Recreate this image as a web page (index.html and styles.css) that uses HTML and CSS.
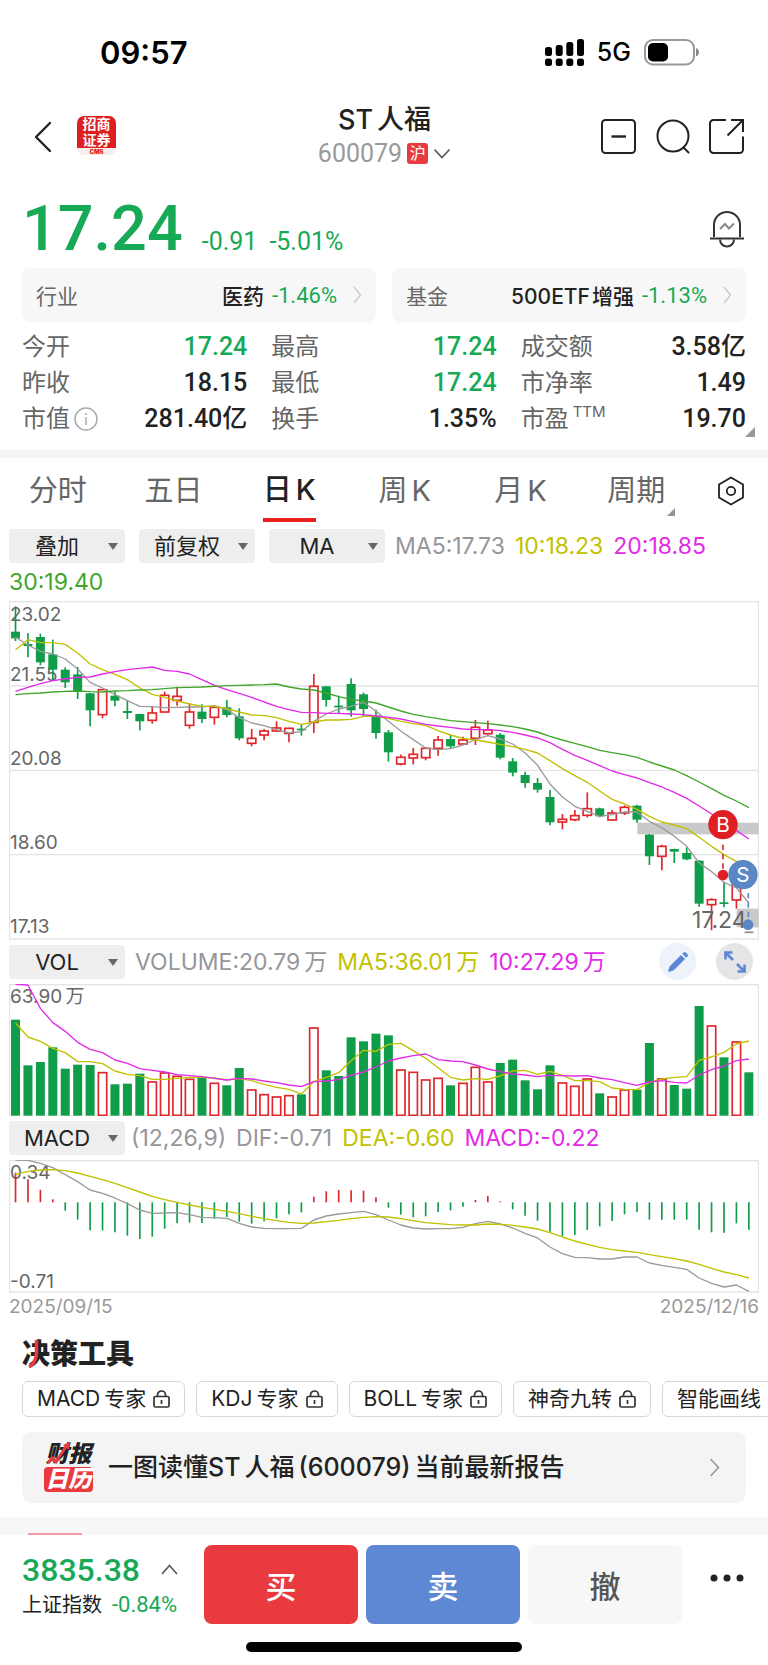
FILE: index.html
```html
<!DOCTYPE html>
<html lang="zh-CN">
<head>
<meta charset="utf-8">
<meta name="viewport" content="width=device-width, initial-scale=1">
<title>ST人福 600079</title>
<link rel="stylesheet" href="styles.css">
</head>
<body>
<div class="status">
  <span class="clock">09:57</span>
  <span class="status-right">
    <svg width="39" height="27" viewBox="0 0 39 27"><g><rect x="0" y="8" width="7" height="9" rx="2.5"/><rect x="10.700" y="6" width="7" height="11" rx="2.5"/><rect x="21.300" y="3" width="7" height="14" rx="2.500"/><rect x="32" y="0" width="7" height="17" rx="2.500"/><rect x="0" y="19.500" width="7" height="7.500" rx="2.500"/><rect x="10.700" y="19.500" width="7" height="7.500" rx="2.500"/><rect x="21.300" y="19.500" width="7" height="7.500" rx="2.500"/><rect x="32" y="19.500" width="7" height="7.500" rx="2.500"/></g></svg>
    <span class="net">5G</span>
    <svg width="56" height="27" viewBox="0 0 56 27"><rect x="1" y="1" width="49" height="24.500" rx="8" fill="none" stroke="#999" stroke-width="2"/><rect x="4" y="4" width="20" height="18.500" rx="5"/><path d="M52 9c4 1.500 4 7 0 8.500z" fill="#888"/></svg>
  </span>
</div>

<header class="head">
  <div class="head-left">
    <button class="icon-btn" aria-label="返回"><svg width="18" height="32" viewBox="0 0 18 32"><path d="M16 2 2 16l14 14" fill="none" stroke="#222" stroke-width="2.400" stroke-linecap="round" stroke-linejoin="round"/></svg></button>
    <div class="broker"><span>招商</span><span>证券</span><b>CMS</b></div>
  </div>
  <div class="head-mid">
    <h1>ST<span class="cjk-gap">人福</span></h1>
    <div class="code"><span class="num">600079</span><span class="badge">沪</span><svg width="18" height="11" viewBox="0 0 18 11"><path d="m1.500 1.500 7.500 8 7.500-8" fill="none" stroke="#555" stroke-width="1.600"/></svg></div>
  </div>
  <div class="head-right">
    <button class="icon-btn" aria-label="移除自选"><svg width="36" height="36" viewBox="0 0 36 36"><g fill="none" stroke="#222" stroke-width="2"><rect x="1" y="1" width="33" height="33" rx="3.500"/><path d="M10.500 17.500h14.500" stroke-width="2.400"/></g></svg></button>
    <button class="icon-btn" aria-label="搜索"><svg width="36" height="36" viewBox="0 0 36 36"><g fill="none" stroke="#222" stroke-width="2" stroke-linecap="round"><circle cx="18" cy="17" r="15.500"/><path d="m28.500 28.500 5 5"/></g></svg></button>
    <button class="icon-btn" aria-label="分享"><svg width="36" height="36" viewBox="0 0 36 36"><g fill="none" stroke="#222" stroke-width="2"><path d="M17 1H4.500A3.500 3.500 0 0 0 1 4.500v26A3.500 3.500 0 0 0 4.500 34h26a3.500 3.500 0 0 0 3.500-3.500V17.500M22 1h12v12M34 1 18.500 16.500"/></g></svg></button>
  </div>
</header>

<section class="price-row">
  <strong class="price num">17.24</strong><span class="delta num">-0.91</span><span class="delta num">-5.01%</span>
  <button class="icon-btn bell" aria-label="预警"><svg width="36" height="38" viewBox="0 0 36 38"><g fill="none" stroke="#333" stroke-width="2"><path d="M5 27V15a13 13 0 0 1 26 0v12M1 28.500h34"/><path d="M11 29.500a7 7 0 0 0 14 0"/><path d="m11 19 5-5 4 4.500 5-5" stroke="#888"/></g></svg></button>
</section>

<section class="cards">
  <a class="tag-card" href="#"><span class="lab">行业</span><span class="name">医药</span><span class="num g">-1.46%</span><svg width="9" height="18" viewBox="0 0 9 18"><path d="m1 1 6.500 8L1 17" fill="none" stroke="#ccc" stroke-width="1.500"/></svg></a>
  <a class="tag-card" href="#"><span class="lab">基金</span><span class="name">500ETF<span class="thin-gap">增强</span></span><span class="num g">-1.13%</span><svg width="9" height="18" viewBox="0 0 9 18"><path d="m1 1 6.500 8L1 17" fill="none" stroke="#ccc" stroke-width="1.500"/></svg></a>
</section>

<dl class="stats">
  <div><dt>今开</dt><dd class="g">17.24</dd></div>
  <div><dt>最高</dt><dd class="g">17.24</dd></div>
  <div><dt>成交额</dt><dd>3.58亿</dd></div>
  <div><dt>昨收</dt><dd>18.15</dd></div>
  <div><dt>最低</dt><dd class="g">17.24</dd></div>
  <div><dt>市净率</dt><dd>1.49</dd></div>
  <div><dt class="with-info">市值<svg width="24" height="24" viewBox="0 0 24 24"><g fill="none" stroke="#aaa" stroke-width="1.500"><circle cx="12" cy="12" r="11"/><path d="M12 10v8M12 6v2"/></g></svg></dt><dd>281.40亿</dd></div>
  <div><dt>换手</dt><dd>1.35%</dd></div>
  <div><dt>市盈<sup>TTM</sup></dt><dd>19.70</dd></div>
  <i class="corner"></i>
</dl>
<div class="band"></div>

<nav class="tabs">
  <button>分时</button><button>五日</button><button class="on">日<span class="cjk-gap">K</span></button><button>周<span class="cjk-gap">K</span></button><button>月<span class="cjk-gap">K</span></button><button class="more">周期</button>
  <button class="icon-btn" aria-label="设置"><svg width="28" height="30" viewBox="0 0 28 30"><g fill="none" stroke="#222" stroke-width="1.800" stroke-linejoin="round"><path d="M14 1.500 26 8.500v13l-12 7-12-7v-13z"/><circle cx="14" cy="15" r="4.200"/></g></svg></button>
</nav>

<main class="charts">
  <div class="bar wrap">
    <label class="pick"><select aria-label="叠加"><option>叠加</option></select></label>
    <label class="pick"><select aria-label="复权"><option>前复权</option></select></label>
    <label class="pick last"><select aria-label="均线"><option>MA</option></select></label>
    <span class="gray">MA5:17.73</span><span class="yellow">10:18.23</span><span class="pink">20:18.85</span><span class="green">30:19.40</span>
  </div>
  <svg id="kline" class="chart" viewBox="27 34 2250 1016"></svg>
  <div class="bar">
    <label class="pick last"><select aria-label="成交量指标"><option>VOL</option></select></label>
    <span class="gray">VOLUME:20.79<span class="cjk-gap">万</span></span><span class="yellow">MA5:36.01<span class="cjk-gap">万</span></span><span class="pink">10:27.29<span class="cjk-gap">万</span></span>
    <span class="tools">
      <button class="round blue" aria-label="画线"><svg width="22" height="22" viewBox="0 0 22 22"><path d="M1 21 2.500 15.500 14 4l4 4L6.500 19.500zM15.200 2.800l1.300-1.300a1.600 1.600 0 0 1 2.300 0l1.700 1.700a1.600 1.600 0 0 1 0 2.300l-1.300 1.300z" fill="#5b87d6"/></svg></button>
      <button class="round" aria-label="全屏"><svg width="22" height="22" viewBox="0 0 22 22"><path d="M1.500 8.500v-7h7M2 2l7 7M20.500 13.500v7h-7M20 20l-7-7" fill="none" stroke="#5b87d6" stroke-width="2.600"/></svg></button>
    </span>
  </div>
  <svg id="vol" class="chart" viewBox="27 147 2250 398"></svg>
  <div class="bar tight">
    <label class="pick"><select aria-label="指标"><option>MACD</option></select></label>
    <span class="gray">(12,26,9)</span><span class="gray">DIF:-0.71</span><span class="yellow">DEA:-0.60</span><span class="pink">MACD:-0.22</span>
  </div>
  <svg id="macd" class="chart" viewBox="27 677 2250 398"></svg>
  <div class="dates"><span>2025/09/15</span><span>2025/12/16</span></div>
</main>

<section class="decide">
  <h2>决策工具<svg class="slash" width="12" height="28" viewBox="0 0 12 28"><path d="M8.500 0v11C8.500 20 6 24.500 1 27" fill="none" stroke="#e93a3f" stroke-width="3.500"/></svg></h2>
  <div class="chips">
    <button><span>MACD<span class="cjk-gap">专家</span></span><svg width="17" height="18" viewBox="0 0 17 18"><use href="#lock"/></svg></button>
    <button><span>KDJ<span class="cjk-gap">专家</span></span><svg width="17" height="18" viewBox="0 0 17 18"><use href="#lock"/></svg></button>
    <button><span>BOLL<span class="cjk-gap">专家</span></span><svg width="17" height="18" viewBox="0 0 17 18"><use href="#lock"/></svg></button>
    <button><span>神奇九转</span><svg width="17" height="18" viewBox="0 0 17 18"><use href="#lock"/></svg></button>
    <button><span>智能画线</span><svg width="17" height="18" viewBox="0 0 17 18"><g id="lock" fill="none" stroke="#333" stroke-width="1.700"><rect x="1" y="6.500" width="15" height="10.500" rx="1.500"/><path d="M4.500 6.500V5a4 4 0 0 1 8 0v1.500M8.500 10v4"/></g></svg></button>
  </div>
  <a class="report" href="#">
    <span class="cal"><span class="cal-top">财报<svg class="tick" width="26" height="24" viewBox="0 0 26 24"><path d="m2 21 4-5 4 4L21 3" fill="none" stroke="#e93a3f" stroke-width="3"/><path d="m17 3 7-3-1 8z" fill="#e93a3f"/></svg></span><span class="cal-bot">日历</span></span>
    <span class="report-text">一图读懂ST<span class="cjk-gap">人福</span><span class="cjk-gap">(600079)</span><span class="cjk-gap">当前最新报告</span></span>
    <svg width="11" height="19" viewBox="0 0 11 19"><path d="m1.500 1 8 8.500-8 8.500" fill="none" stroke="#999" stroke-width="1.600"/></svg>
  </a>
</section>
<div class="band low"><i></i></div>

<footer class="foot">
  <div class="index">
    <div class="index-top"><strong class="num g">3835.38</strong><svg width="17" height="11" viewBox="0 0 17 11"><path d="m1 10 7.500-8.500L16 10" fill="none" stroke="#555" stroke-width="1.600"/></svg></div>
    <div class="index-sub"><span>上证指数</span><span class="num g">-0.84%</span></div>
  </div>
  <button class="act buy">买</button>
  <button class="act sell">卖</button>
  <button class="act undo">撤</button>
  <button class="dots" aria-label="更多"><svg width="34" height="8" viewBox="0 0 34 8"><g fill="#222"><circle cx="4" cy="4" r="3.500"/><circle cx="17" cy="4" r="3.500"/><circle cx="30" cy="4" r="3.500"/></g></svg></button>
</footer>
<div class="home"></div>
<script src="chart.js"></script>
</body>
</html>
```

FILE: styles.css
```css
* { box-sizing: border-box; }
body { margin: 0; background: #fff; color: #222; font-family: Inter, "Noto Sans CJK SC", sans-serif; overflow-x: hidden; }
button, select { font: inherit; color: inherit; border: 0; padding: 0; margin: 0; background: none; }
a { color: inherit; text-decoration: none; }
svg { display: block; flex: none; }
.num { font-family: Roboto, "Noto Sans CJK SC", sans-serif; }
.g { color: #18a957; }
.cjk-gap { margin-left: 4px; }
.thin-gap { margin-left: 2px; }
.icon-btn { display: block; }

.status { display: flex; justify-content: space-between; align-items: center; height: 70px; padding: 34px 68px 0 100px; color: #000; }
.clock { font-size: 31px; font-weight: 600; }
.status-right { display: flex; align-items: center; gap: 13px; }
.net { font-size: 25px; font-weight: 500; line-height: 32px; }

.head { display: grid; grid-template-columns: 1fr auto 1fr; align-items: center; margin-top: 34px; padding: 0 23px 0 34px; }
.head-left { display: flex; align-items: center; gap: 25px; }
.broker { display: flex; flex-direction: column; align-items: center; width: 39px; height: 39px; margin-bottom: 4px; border-radius: 7px; background: linear-gradient(#dd1f1f 32px, #f7eeee 32px); color: #fff; font-size: 14px; font-weight: 700; line-height: 16px; }
.broker b { color: #d22; font-size: 6px; line-height: 7px; }
.head-mid { text-align: center; margin-left: -10px; }
h1 { margin: 0; font-size: 27px; line-height: 32px; font-weight: 500; }
.code { display: flex; justify-content: center; align-items: center; gap: 5px; height: 34px; font-size: 25px; color: #999; }
.badge { width: 21px; height: 21px; border-radius: 3px; background: #e93a3f; color: #fff; font-size: 16px; line-height: 21px; }
.head-right { display: flex; justify-content: flex-end; gap: 18px; }

.price-row { display: flex; align-items: baseline; height: 56px; margin-top: 31px; padding: 0 23px 0 22px; line-height: 56px; color: #18a957; }
.price { font-size: 63px; font-weight: 500; margin-right: 19px; }
.delta { font-size: 25px; margin-right: 12px; }
.bell { margin-left: auto; align-self: center; }

.cards { display: grid; grid-template-columns: 1fr 1fr; gap: 16px; margin: 11px 22px 0; }
.tag-card { display: flex; align-items: center; height: 54px; padding: 0 14px; border-radius: 8px; background: #f7f7f7; font-size: 21px; }
.tag-card .lab { margin-right: auto; color: #666; }
.tag-card .name { font-weight: 500; margin-right: 8px; }
.tag-card .num { font-size: 22px; }
.tag-card svg { margin-left: 16px; }

.stats { position: relative; display: grid; grid-template-columns: 1fr 1fr 1fr; column-gap: 24px; margin: 7px 22px 13px; }
.stats div { display: flex; justify-content: space-between; align-items: center; height: 36px; line-height: 36px; }
.stats dt { font-size: 24px; color: #666; }
.stats dd { margin: 0; font: 500 25px/36px Roboto, "Noto Sans CJK SC", sans-serif; }
.with-info { display: flex; align-items: center; gap: 4px; }
.stats sup { font-size: 15px; line-height: 15px; vertical-align: 10px; margin-left: 4px; }
.corner { position: absolute; right: -9px; bottom: 0; border: 5px solid transparent; border-right-color: #999; border-bottom-color: #999; }
.band { height: 8px; background: #f4f4f4; }

.tabs { display: grid; grid-template-columns: repeat(6, 1fr) 74px; justify-items: center; align-items: center; height: 66px; font-size: 29px; color: #666; }
.tabs button { position: relative; line-height: 60px; height: 62px; }
.tabs .icon-btn { display: flex; align-items: center; }
.tabs .on { color: #222; font-weight: 500; border-bottom: 4px solid #ea2020; }
.more::after { content: ""; position: absolute; right: -10px; bottom: 6px; border: 4px solid transparent; border-right-color: #8d949c; border-bottom-color: #8d949c; }

.charts { padding: 5px 9px 0; }
.bar { display: flex; align-items: center; column-gap: 10px; height: 34px; margin: 5px 0; font-size: 23px; line-height: 34px; white-space: nowrap; }
.bar.wrap { flex-wrap: wrap; height: auto; margin: 0; row-gap: 2px; padding-bottom: 2px; }
.tight .pick { margin-right: -4px; }
.wrap .pick { margin-right: 4px; }
.wrap .last { margin-right: 0; }
.pick { position: relative; flex: none; width: 116px; height: 34px; }
.pick select { appearance: none; width: 100%; height: 100%; padding-right: 20px; border-radius: 4px; background: #eee; color: #222; font-size: 22px; text-align: center; text-align-last: center; }
.pick::after { content: ""; position: absolute; right: 7px; top: 14px; border: 5px solid transparent; border-top: 7px solid #666; border-bottom: 0; pointer-events: none; }
.gray { color: #96969b; }
.yellow { color: #c1c100; }
.pink { color: #e22ae8; }
.green { color: #40a629; }
.tools { display: flex; gap: 20px; margin-left: auto; padding-right: 6px; }
.round { display: flex; align-items: center; justify-content: center; width: 37px; height: 37px; border-radius: 50%; background: #e5e5e7; }
.round.blue { background: #edf2fb; }
.chart { width: 100%; height: auto; }
.dates { display: flex; justify-content: space-between; font-size: 19px; line-height: 28px; color: #999; }

.decide { padding: 17px 22px 14px; }
h2 { position: relative; margin: 0; font-size: 28px; line-height: 32px; font-weight: 900; }
.slash { position: absolute; left: 6px; top: 2px; }
.chips { display: flex; gap: 11px; margin: 11px -22px 15px 0; overflow: hidden; }
.chips button { display: flex; align-items: center; flex: none; height: 36px; padding: 0 14px; border: 1px solid #d8d8d8; border-radius: 6px; font-size: 21px; line-height: 34px; }
.chips svg { margin-left: 7px; }
.report { display: flex; align-items: center; height: 71px; padding: 0 26px 0 22px; border-radius: 10px; background: #f4f4f4; font-size: 25px; font-weight: 500; }
.report-text { flex: 1; margin-left: 15px; line-height: 36px; white-space: nowrap; }
.cal { display: flex; flex-direction: column; width: 49px; font-size: 23px; line-height: 25px; font-weight: 900; font-style: italic; text-align: center; }
.cal-top { position: relative; }
.tick { position: absolute; left: 2px; top: 0; }
.cal-bot { border-radius: 4px; background: #e93a3f; color: #fff; }
.low { display: flex; align-items: flex-end; height: 18px; padding-left: 28px; background: #f7f7f7; }
.low i { width: 54px; height: 2px; background: #f59aa0; }

.foot { display: grid; grid-template-columns: 174px 1fr 1fr 1fr 54px; column-gap: 8px; padding: 10px 24px 0 22px; }
.index-top { display: flex; align-items: center; justify-content: space-between; height: 50px; padding-right: 18px; font-size: 32px; }
.index-top strong { font-weight: 500; }
.index-sub { display: flex; align-items: center; gap: 10px; font-size: 20px; line-height: 20px; white-space: nowrap; }
.index-sub .num { font-size: 22px; }
.act { height: 79px; border-radius: 8px; font-size: 31px; font-weight: 500; color: #fff; }
.buy { background: #e93a3f; }
.sell { background: #5e87d4; }
.undo { background: #f7f7f7; color: #555; }
.dots { justify-self: end; align-self: start; height: 66px; }
.home { width: 36%; height: 10px; margin: 18px auto 14px; border-radius: 5px; background: #000; }
.chart text { font-family: Inter, "Noto Sans CJK SC", sans-serif; font-size: 57px; fill: #666; }
.chart .big { font-size: 69px; }
.chart .mark { font-size: 62px; fill: #fff; text-anchor: middle; }
```

FILE: chart.js
```js
const GREEN = '#0f9d49', RED = '#e0262b';
const STEP = 37.29;
const x = i => 46.5 + STEP * i;

const rect = (l, t, w, h, fill, stroke) =>
  `<rect x="${l}" y="${t}" width="${w}" height="${h}" fill="${fill}"${stroke ? ` stroke="${stroke}" stroke-width="5"` : ''}/>`;
const line = (x1, y1, x2, y2, color, w = 5, extra = '') =>
  `<line x1="${x1}" y1="${y1}" x2="${x2}" y2="${y2}" stroke="${color}" stroke-width="${w}" ${extra}/>`;
const curve = (ys, color) =>
  `<polyline fill="none" stroke="${color}" stroke-width="4" stroke-linejoin="round" points="${ys.map((y, i) => x(i) + ',' + y).join(' ')}"/>`;
const text = (tx, ty, s, cls = '') => `<text x="${tx}" y="${ty}" class="${cls}">${s}</text>`;
const frame = (t, h) => rect(28.5, t, 2247, h, 'none').replace('/>', ' stroke="#e4e4e4" stroke-width="4"/>');

// [up, high, top, bottom, low]
const candles = [
  [0,50,126,146,154],[0,130,163,169,203],[0,132,142,218,227],[0,150,194,240,270],[0,233,240,278,295],
  [0,232,254,304,328],[0,310,311,362,410],[1,298,300,375,386],[0,305,318,333,350],[0,333,364,370,388],
  [0,372,373,395,422],[1,352,370,392,402],[1,306,317,367,368],[1,291,320,332,348],[1,340,367,407,417],
  [0,344,366,388,400],[1,350,353,383,405],[0,331,353,376,383],[0,356,380,446,452],[1,418,446,461,470],
  [1,418,424,436,452],[1,395,415,424,426],[1,414,416,431,458],[0,405,417,422,438],[1,253,290,398,430],
  [0,289,290,331,351],[0,318,348,353,372],[0,266,283,362,381],[0,309,314,358,380],[0,360,378,430,447],
  [0,421,428,488,516],[1,495,503,523,527],[1,475,494,505,524],[1,472,476,504,512],[1,439,451,476,498],
  [0,436,448,470,476],[1,441,451,463,466],[1,391,413,446,466],[1,393,421,432,435],[0,430,435,504,509],
  [0,505,515,549,560],[0,546,556,580,594],[0,565,580,600,609],[0,601,622,698,707],[1,673,689,697,719],
  [1,661,678,690,695],[1,608,657,677,683],[0,654,656,680,683],[1,661,670,691,693],[1,647,653,670,676],
  [0,645,648,690,699],[0,733,735,800,826],[1,765,770,800,842],[0,777,778,786,820],[0,773,790,809,812],
  [0,812,813,942,951],[1,926,930,945,1022],[0,876,938,943,953],[1,850,870,931,957]
];
const ma5 = [142,166,185,193,208,238,278,295,315,333,350,351,354,353,352,352,348,360,384,400,408,420,430,426,395,373,358,350,338,365,395,424,450,475,480,477,466,450,438,448,463,490,527,583,622,650,665,680,675,667,667,695,714,740,770,820,846,878,895,940];
const ma10 = [180,150,159,159,164,190,223,240,254,270,295,314,323,334,343,350,350,357,367,376,378,384,395,404,397,391,391,389,380,379,386,395,402,407,423,436,446,451,457,464,471,479,490,513,537,558,578,604,629,643,659,680,697,706,717,743,770,795,815,840];
const ma20 = [305,293,282,273,268,263,262,253,246,240,236,232,242,245,253,270,287,300,311,323,337,350,360,368,369,371,371,373,375,379,383,388,396,404,409,413,418,420,420,423,428,436,445,459,479,497,512,528,544,555,565,579,592,608,626,649,673,697,722,748];
const ma30 = [315,312,310,307,305,304,306,307,304,303,301,300,297,294,293,292,290,288,287,286,285,283,292,298,301,310,321,329,334,340,352,364,374,381,387,393,396,399,402,406,411,418,427,440,451,461,471,482,489,495,503,517,529,541,558,577,597,617,634,654];

let k = frame(36, 1012);
for (const y of [289, 542, 795]) k += line(28, y, 2276, y, '#e4e4e4', 4);
k += rect(1912, 699, 364, 35, '#c9c9c9') + rect(2210, 957, 66, 56, '#c9c9c9');
k += text(30, 93, '23.02') + text(30, 274, '21.55') + text(30, 526, '20.08') + text(30, 777, '18.60') + text(30, 1029, '17.13');
candles.forEach(([up, h, t, b, l], i) => {
  const c = up ? RED : GREEN;
  k += line(x(i), h, x(i), up ? t : l, c);
  if (up) k += line(x(i), b, x(i), l, c) + rect(x(i) - 12.5, t, 25, b - t, 'none', c);
  else k += rect(x(i) - 13.5, t, 27, b - t, c);
});
k += line(2234, 1028, 2260, 1028, '#888', 5);
k += curve(ma5, '#9a9a9a') + curve(ma10, '#c1c100') + curve(ma20, '#e22ae8') + curve(ma30, '#40a629');
k += text(2076, 1014, '17.24', 'big');
k += line(2169, 765, 2169, 845, RED, 5, 'stroke-dasharray="16 12"') + `<circle cx="2169" cy="856" r="16" fill="#e01f24"/>`;
k += line(2245, 910, 2245, 990, '#5b87c5', 5, 'stroke-dasharray="16 12"') + `<circle cx="2244" cy="1005" r="16" fill="#5b87c5"/>`;
k += `<circle cx="2169" cy="705" r="44" fill="#e01f24"/><circle cx="2229" cy="855" r="44" fill="#5b87c5"/>`;
k += text(2169, 728, 'B', 'mark') + text(2229, 878, 'S', 'mark');
document.getElementById('kline').innerHTML = k;

// [up, top]
const volumes = [
  [0,254],[0,391],[0,381],[0,337],[0,401],[0,389],[0,390],[1,413],[0,448],[0,446],[0,416],[1,441],[1,414],[1,424],[1,433],
  [0,428],[1,445],[0,451],[0,399],[1,465],[1,479],[1,486],[1,482],[0,478],[1,279],[0,406],[0,423],[0,307],[0,319],[0,296],
  [0,301],[1,405],[1,412],[1,435],[1,430],[0,451],[1,445],[1,397],[1,441],[0,384],[0,374],[0,436],[0,463],[0,391],[1,444],
  [1,454],[1,432],[0,475],[1,486],[1,465],[0,464],[0,324],[1,432],[0,450],[0,461],[0,213],[1,273],[0,367],[1,321],[0,412]
];
const vol5 = [264,306,319,340,353,380,380,386,408,418,422,433,433,430,427,427,429,435,431,437,448,457,463,477,440,427,413,377,346,349,328,325,347,370,398,427,435,431,433,423,408,406,418,409,421,437,437,440,459,463,464,442,432,427,425,376,366,352,327,318];
const vol10 = [148,150,220,263,289,322,343,353,375,385,401,406,411,419,422,425,430,435,430,432,438,443,450,455,440,438,434,421,411,396,378,369,362,357,374,378,380,390,402,410,417,420,425,421,422,423,422,429,434,443,451,441,437,442,444,420,404,393,377,372];

let v = frame(149, 394) + text(30, 205, '63.90<tspan dx="10">万</tspan>');
volumes.forEach(([up, t], i) => {
  v += up ? rect(x(i) - 12.5, t, 25, 541 - t, 'none', RED) : rect(x(i) - 13.5, t, 27, 542 - t, GREEN);
});
v += curve(vol5, '#c1c100') + curve(vol10, '#e22ae8');
document.getElementById('vol').innerHTML = v;

const ZERO = 804;
const hist = [715,735,766,795,829,856,888,888,894,904,914,907,883,867,865,866,853,848,862,868,861,852,840,834,787,771,767,768,769,789,820,841,849,846,833,828,817,797,785,801,825,844,859,892,905,902,887,876,860,840,833,856,856,856,856,886,894,895,867,886];
const dif = [677,678,687,700,721,742,767,777,791,808,827,837,836,835,841,849,850,852,867,878,882,883,883,882,857,845,839,835,831,841,857,872,881,884,883,883,879,868,861,869,881,897,911,938,958,969,970,974,974,968,968,986,993,999,1005,1031,1047,1058,1052,1071];
const dea = [720,711,707,706,709,716,726,736,747,760,773,786,796,804,812,819,825,831,838,846,853,859,864,867,866,862,858,853,849,847,848,853,859,865,868,871,872,872,869,870,873,878,884,895,908,920,930,939,946,950,954,961,967,973,980,990,1002,1013,1021,1031];

let m = frame(679, 394) + text(30, 734, '0.34') + text(30, 1060, '-0.71');
hist.forEach((y, i) => { m += line(x(i), ZERO, x(i), y, y < ZERO ? RED : GREEN, 5); });
m += curve(dif, '#9a9a9a') + curve(dea, '#c1c100');
document.getElementById('macd').innerHTML = m;
```
